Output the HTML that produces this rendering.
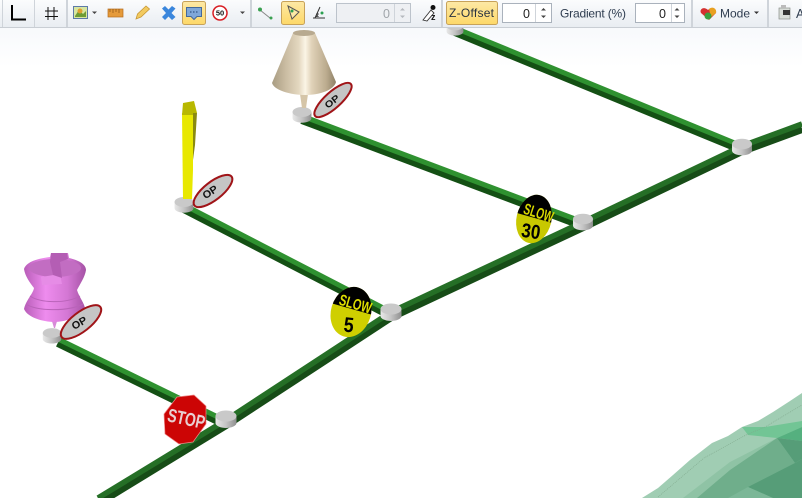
<!DOCTYPE html>
<html><head><meta charset="utf-8">
<style>
html,body{margin:0;padding:0;background:#fff}
#w{position:relative;width:802px;height:498px;overflow:hidden;font-family:"Liberation Sans",sans-serif}
svg{position:absolute;left:0;top:0}
</style></head>
<body><div id="w">
<svg width="802" height="498" viewBox="0 0 802 498" xmlns="http://www.w3.org/2000/svg" font-family="Liberation Sans, sans-serif">
<defs>
<linearGradient id="bg" x1="0" y1="0" x2="0" y2="1"><stop offset="0" stop-color="#f7f9fc"/><stop offset="1" stop-color="#fff"/></linearGradient>
<linearGradient id="tb" x1="0" y1="0" x2="0" y2="1"><stop offset="0" stop-color="#fbfcfd"/><stop offset="1" stop-color="#e9edf2"/></linearGradient>
<linearGradient id="hl" x1="0" y1="0" x2="0" y2="1"><stop offset="0" stop-color="#fde9a6"/><stop offset="1" stop-color="#fdd868"/></linearGradient>
<linearGradient id="cyl" x1="0" y1="0" x2="1" y2="0"><stop offset="0" stop-color="#e8e8e8"/><stop offset=".5" stop-color="#c4c4c4"/><stop offset="1" stop-color="#8f8f8f"/></linearGradient>
<linearGradient id="cone" x1="0" y1="0" x2="1" y2="0"><stop offset="0" stop-color="#a89c82"/><stop offset=".2" stop-color="#c8baa0"/><stop offset=".42" stop-color="#e4d8c0"/><stop offset=".52" stop-color="#fbf5e6"/><stop offset=".62" stop-color="#e0d2b8"/><stop offset=".85" stop-color="#bbab8e"/><stop offset="1" stop-color="#8e8066"/></linearGradient>
<linearGradient id="pur" x1="0" y1="0" x2="1" y2="0"><stop offset="0" stop-color="#b85db8"/><stop offset=".35" stop-color="#ee8cee"/><stop offset=".7" stop-color="#d477d4"/><stop offset="1" stop-color="#a552a5"/></linearGradient>
<g id="cy"><path d="M-10.500 0V7C-10.500 10 -5 12 0 12S10.500 10 10.500 7V0Z" fill="url(#cyl)"/><ellipse rx="10.500" ry="5.500" fill="#c9c9c9"/></g>
<clipPath id="c5"><ellipse cx="351" cy="312" rx="20" ry="25.500" transform="rotate(17 351 312)"/></clipPath>
<clipPath id="c30"><ellipse cx="534" cy="219" rx="17.500" ry="24.500" transform="rotate(13 534 219)"/></clipPath>
</defs>
<rect width="802" height="498" fill="#fff"/>
<rect y="27" width="802" height="40" fill="url(#bg)"/>

<!-- terrain -->
<path d="M642 498L658 488 673 475 690 460 712 443 728 436 742 427 758 421 773 412 790 401 802 393V498Z" fill="#a0cdb3"/>
<path d="M683 498L730 462 777 438 802 440V498Z" fill="#8fc3a5"/>
<path d="M697 498L730 470 777 438 795 463 802 470V498Z" fill="#6fae8b"/>
<path d="M748 487L795 463 802 459V498H773Z" fill="#569d78"/>
<path d="M728 498L748 487 773 498Z" fill="#7bb797"/>
<path d="M742 427L748 435 777 438 802 427V421L765 427Z" fill="#72c595"/>
<path d="M777 438L802 427V441Z" fill="#55b07f"/>
<path d="M777 438L795 463 802 459V441Z" fill="#569d78"/>
<path d="M658 497L704 458 746 435 765 427 802 405" fill="none" stroke="#7fa88c" stroke-width=".6" stroke-dasharray="1 1"/>

<!-- roads -->
<g fill="none">
<path d="M58 342.500L226 424.500" stroke="#145014" stroke-width="9"/><path d="M58 339L226 421" stroke="#2f9130" stroke-width="5"/>
<path d="M184 208.500L391 315.500" stroke="#145014" stroke-width="9"/><path d="M184 205L391 312" stroke="#2f9130" stroke-width="5"/>
<path d="M302 119.500L583 225.500" stroke="#145014" stroke-width="9"/><path d="M302 116L583 222" stroke="#2f9130" stroke-width="5"/>
<path d="M455 31.500L742 149.500" stroke="#145014" stroke-width="9"/><path d="M455 28L742 146" stroke="#2f9130" stroke-width="5"/>
<path d="M100 501.500L226 424.500 391 316.500 583 226.500 742 150.500 802 128.500" stroke="#174c17" stroke-width="9"/>
<path d="M98 498L226 420 391 312 583 222 742 146 802 124" stroke="#256f26" stroke-width="5.500"/>
</g>
<!-- node cylinders -->
<use href="#cy" transform="translate(226 416)"/>
<use href="#cy" transform="translate(391 309)"/>
<use href="#cy" transform="translate(583 219) scale(.95)"/>
<use href="#cy" transform="translate(742 144) scale(.95)"/>
<use href="#cy" transform="translate(455 26) scale(.8)"/>
<use href="#cy" transform="translate(52 333) scale(.88)"/>
<use href="#cy" transform="translate(184 202) scale(.9)"/>
<use href="#cy" transform="translate(302 112) scale(.9)"/>

<!-- STOP -->
<polygon points="177,397 194,395 206,406 206,424 193,442 179,444 165,434 164,414" fill="#cc0505" stroke="#e88" stroke-width=".7"/>
<text font-size="14" font-weight="700" fill="#e8cfd0" text-anchor="middle" transform="translate(185 425) rotate(12) scale(1 1.35)">STOP</text>

<!-- SLOW 5 -->
<ellipse cx="351" cy="312" rx="20" ry="25.500" transform="rotate(17 351 312)" fill="#cfcf00"/>
<g clip-path="url(#c5)"><path d="M320 300L380 317V280H320Z" fill="#000"/></g>
<text font-size="13" font-weight="700" fill="#dede00" text-anchor="middle" transform="translate(354 309) rotate(16) scale(.85 1.2)">SLOW</text>
<text font-size="21" font-weight="700" fill="#000" text-anchor="middle" transform="translate(348 332) rotate(6) scale(.85 1)">5</text>

<!-- SLOW 30 -->
<ellipse cx="534" cy="219" rx="17.500" ry="24.500" transform="rotate(13 534 219)" fill="#c8c800"/>
<g clip-path="url(#c30)"><path d="M510 211L556 224V190H510Z" fill="#000"/></g>
<text font-size="13" font-weight="700" fill="#d8d800" text-anchor="middle" transform="translate(537 218) rotate(18) scale(.78 1.2)">SLOW</text>
<text font-size="20" font-weight="700" fill="#000" text-anchor="middle" transform="translate(530 238) rotate(8) scale(.85 1)">30</text>

<!-- purple lamp -->
<path d="M51 318H58L55 328H54Z" fill="#d88ad8"/>
<path d="M24 269C26 263 34 259 50 257L51 253H68L69 258C78 260 86 264 86 270 85 277 80 284 77 290 79 297 85 304 85 309 80 316 68 322 53 322 38 321 27 316 24 309 26 300 33 294 34 288 30 283 25 276 24 269Z" fill="url(#pur)"/>
<ellipse cx="55" cy="268" rx="26" ry="9" fill="#c26dc2"/>
<path d="M41 277L60 274 62 284 42 285Z" fill="#e68ce6"/>
<path d="M50 262L51 253H67L68 259 60 262 62 278 53 275Z" fill="#b45eb4"/>
<path d="M26 304C35 311 68 312 83 304M30 296C40 303 66 304 80 296" stroke="#b963b9" fill="none" stroke-width="1"/>

<!-- beige cone -->
<path d="M300 94H308L306 108H302Z" fill="#d5c5a8"/>
<path d="M293 33L272 83C274 90 290 95 305 95 320 95 334 90 336 82L315 33Z" fill="url(#cone)"/>
<ellipse cx="304" cy="33" rx="11" ry="3" fill="#b8aa90"/>

<!-- yellow -->
<path d="M182 113H193V170L192 199H183Z" fill="#e8e800"/>
<path d="M183 103L194 101 197 113 193 115 182 115Z" fill="#b8b800"/>
<path d="M193 113L197 113 195 145 193 160Z" fill="#8a8a10"/>

<!-- OP signs -->
<ellipse cx="81" cy="322" rx="24.500" ry="9.500" transform="rotate(-38 81 322)" fill="#c5c5c5" stroke="#a01418" stroke-width="2"/>
<text font-size="11" font-weight="700" fill="#111" text-anchor="middle" transform="translate(81 326) rotate(-30) scale(1 .95)">OP</text>
<ellipse cx="333" cy="100" rx="24" ry="8" transform="rotate(-42 333 100)" fill="#c5c5c5" stroke="#a01418" stroke-width="2"/>
<text font-size="11" font-weight="700" fill="#111" text-anchor="middle" transform="translate(334 104) rotate(-38) scale(1 .85)">OP</text>
<ellipse cx="213" cy="191" rx="23.500" ry="9" transform="rotate(-38 213 191)" fill="#c5c5c5" stroke="#a01418" stroke-width="2"/>
<text font-size="11" font-weight="700" fill="#111" text-anchor="middle" transform="translate(212 195) rotate(-33) scale(1 .95)">OP</text>

<!-- toolbar -->
<rect width="802" height="27" fill="url(#tb)"/>
<rect y="27" width="802" height="1" fill="#c9ced4"/>
<g fill="#cfd4da"><rect x="2" y="0" width="1" height="27"/><rect x="34" y="0" width="1" height="27"/><rect x="66" y="0" width="2" height="27"/><rect x="250" y="0" width="2" height="27"/><rect x="441" y="0" width="2" height="27"/><rect x="691" y="0" width="2" height="27"/><rect x="767" y="0" width="2" height="27"/></g>

<path d="M12 5V19.500H26" fill="none" stroke="#000" stroke-width="2"/>
<path d="M48 7V20M54 7V20M45 11H58M45 16.500H58" stroke="#111" stroke-width="1" fill="none"/>

<rect x="73.500" y="6.500" width="14" height="12" fill="#d8e6a0" stroke="#5d7aa8"/><path d="M75 16L79 10 83 14 86 11V17H75Z" fill="#6f9c34"/><circle cx="80" cy="11" r="2.500" fill="#e0a030"/>
<path d="M92 11.500H97L94.500 14Z" fill="#444"/>
<rect x="108" y="9" width="15" height="8" fill="#e59a3a" stroke="#b56b1e" stroke-width=".7"/><path d="M110 9V12M113 9V13M116 9V12M119 9V13" stroke="#8c5312" stroke-width=".7"/>
<path d="M136 19L137.500 14 146 6 149.500 9 141 17Z" fill="#f2ca60" stroke="#c79836" stroke-width=".8"/>
<path d="M162 8.500L165 6 168.500 9.500 172 6 175.500 8.500 171.500 13 175.500 17 172 20 168.500 16.500 165 20 162 17 166 13Z" fill="#3a86dc"/>
<rect x="182.500" y="1.500" width="23" height="23" rx="2" fill="url(#hl)" stroke="#c7a25a"/>
<path d="M186.500 7.500H201.500V16.500H197L194 19.500 191 16.500H186.500Z" fill="#7fa7d8" stroke="#44699a"/><path d="M190 12H198" stroke="#1f3f70" stroke-dasharray="1.500 1.500"/>
<circle cx="220" cy="13" r="7" fill="#fff" stroke="#d81e24" stroke-width="1.500"/><text x="220" y="15.500" font-size="7.500" font-weight="700" fill="#111" text-anchor="middle">50</text>
<path d="M240 11.500H245L242.500 14Z" fill="#444"/>
<path d="M260 10L270 18" stroke="#888" stroke-width="1"/><circle cx="260" cy="9.500" r="2" fill="#3aa050"/><circle cx="271" cy="18" r="1.500" fill="#3aa050"/>

<rect x="281.500" y="1.500" width="23" height="23" rx="2" fill="url(#hl)" stroke="#c7a25a"/>
<path d="M288 6L299 12 292 19Z" fill="#fde9a6" stroke="#555" stroke-width="1"/><circle cx="292" cy="11" r="1.500" fill="#2aa050"/>
<path d="M313 18H325M315 18L320 7" stroke="#333" stroke-width="1" fill="none"/><circle cx="322" cy="13" r="1.500" fill="#2aa050"/><text x="316" y="17" font-size="6" font-weight="700" fill="#222">z</text>

<rect x="336.500" y="3.500" width="74" height="19" fill="#eef0f3" stroke="#bcc3cb"/><rect x="394" y="4" width="1" height="18" fill="#cfd4da"/>
<text x="390" y="18" font-size="12.500" fill="#a0a5aa" text-anchor="end">0</text>
<path d="M400 10.500L402.500 8 405 10.500ZM400 15.500L402.500 18 405 15.500Z" fill="#b5b9be"/>

<path d="M423 20L431 10 434 13 427 21Z" fill="#fff" stroke="#333" stroke-width=".9"/><circle cx="433" cy="7.500" r="2.500" fill="#111"/><text x="431" y="20" font-size="9" font-weight="700" fill="#111">z</text>

<rect x="446.500" y="1.500" width="51" height="23" rx="2" fill="url(#hl)" stroke="#c7a25a"/>
<text x="449" y="17" font-size="12" fill="#2a3340" textLength="45">Z-Offset</text>

<rect x="502.500" y="3.500" width="49" height="19" fill="#fff" stroke="#aab2bc"/><rect x="535" y="4" width="1" height="18" fill="#cfd4da"/>
<text x="530" y="18" font-size="12.500" fill="#222" text-anchor="end">0</text>
<path d="M541 10.500L543.500 8 546 10.500ZM541 15.500L543.500 18 546 15.500Z" fill="#444"/>

<text x="560" y="17.500" font-size="12" fill="#2f3d50" textLength="66">Gradient (%)</text>

<rect x="635.500" y="3.500" width="49" height="19" fill="#fff" stroke="#aab2bc"/><rect x="671" y="4" width="1" height="18" fill="#cfd4da"/>
<text x="666" y="18" font-size="12.500" fill="#222" text-anchor="end">0</text>
<path d="M674.500 10.500L677 8 679.500 10.500ZM674.500 15.500L677 18 679.500 15.500Z" fill="#444"/>

<path d="M709 20L701 13C699 9 704 6 708 10 712 6 717 9 716 13Z" fill="#d43030"/><path d="M709 9C712 6 717 8 716 13L711 17Z" fill="#e8a020"/><circle cx="708" cy="16" r="3.500" fill="#3aa040"/>
<text x="720" y="17.500" font-size="12" fill="#2f3d50" textLength="30">Mode</text>
<path d="M754 11.500H759L756.500 14Z" fill="#333"/>

<rect x="779" y="8" width="11" height="11" fill="#d8dcd8" stroke="#8a8f8a" stroke-width=".7"/><rect x="783" y="10" width="7" height="5" fill="#333"/><rect x="781" y="5" width="5" height="3" fill="#bbb"/>
<text x="796" y="18" font-size="12.500" fill="#2f3d50">A</text>
</svg>
</div></body></html>
